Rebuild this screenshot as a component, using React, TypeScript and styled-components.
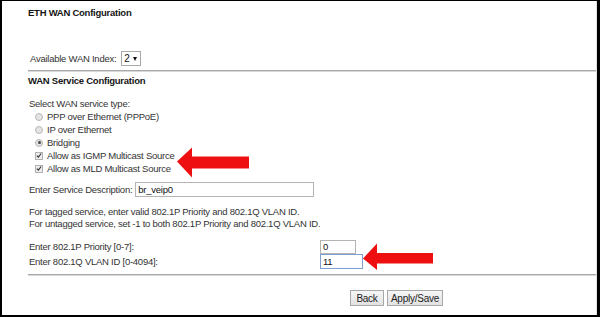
import React from "react";
import styled, { createGlobalStyle } from "styled-components";

const Global = createGlobalStyle`
  html, body { margin: 0; padding: 0; background: #fff; }
  body { font-family: "Liberation Sans", Arial, sans-serif; }
`;

const Page = styled.div`
  position: relative;
  width: 600px;
  height: 317px;
  overflow: hidden;
`;

const Frame = styled.div`
  box-sizing: border-box;
  width: 600px;
  height: 317px;
  border-style: solid;
  border-color: #000;
  border-width: 1px 3px 2px 2px;
  background: #fff;
`;

const Content = styled.div`
  box-sizing: border-box;
  height: 100%;
  padding: 6px 0 0 26px;
  border-right: 1px solid #e2e2e2;
  font-size: 9.5px;
  letter-spacing: -0.25px;
  color: #333;
  display: flex;
  flex-direction: column;
`;

const Title = styled.div<{ $mt?: number }>`
  margin-top: ${(p) => p.$mt ?? 0}px;
  font-weight: bold;
  color: #151515;
  line-height: 12px;
  height: 12px;
`;

const InlineRow = styled.div<{ $mt: number; $pl?: number; $gap?: number }>`
  margin-top: ${(p) => p.$mt}px;
  padding-left: ${(p) => p.$pl ?? 1}px;
  display: flex;
  align-items: center;
  height: 15px;
  gap: ${(p) => p.$gap ?? 3}px;
`;

const SelectBox = styled.div`
  box-sizing: border-box;
  width: 20px;
  height: 15px;
  border: 1px solid #a9a9a9;
  display: flex;
  align-items: center;
  justify-content: space-between;
  padding: 0 3px 0 2px;
  font-size: 10px;
  color: #111;
`;

const Caret = styled.span`
  width: 0;
  height: 0;
  border-left: 2.5px solid transparent;
  border-right: 2.5px solid transparent;
  border-top: 4px solid #111;
`;

const Rule = styled.div<{ $mt: number }>`
  margin-top: ${(p) => p.$mt}px;
  height: 0;
  border-top: 1px solid #a8a8a8;
  border-bottom: 1px solid #d8d8d8;
`;

const Line = styled.div<{ $mt?: number; $h?: number }>`
  margin-top: ${(p) => p.$mt ?? 0}px;
  padding-left: 1px;
  height: ${(p) => p.$h ?? 12}px;
  line-height: ${(p) => p.$h ?? 12}px;
  white-space: nowrap;
`;

const Options = styled.div`
  display: flex;
  flex-direction: column;
  padding-left: 7px;
`;

const OptionRow = styled.div`
  display: flex;
  align-items: center;
  gap: 4px;
  height: 13px;
  white-space: nowrap;
`;

const Radio = styled.span<{ $on?: boolean }>`
  box-sizing: border-box;
  width: 8px;
  height: 8px;
  border-radius: 50%;
  border: 1px solid #b8b8b8;
  background: #e4e4e4;
  display: flex;
  align-items: center;
  justify-content: center;
  &::after {
    content: "";
    display: ${(p) => (p.$on ? "block" : "none")};
    width: 3px;
    height: 3px;
    border-radius: 50%;
    background: #444;
  }
`;

const Check = styled.span`
  box-sizing: border-box;
  width: 8px;
  height: 8px;
  border: 1px solid #b0b0b0;
  background: #ececec;
  display: flex;
  align-items: center;
  justify-content: center;
`;

const TextInput = styled.div<{ $w: number; $focus?: boolean; $h?: number }>`
  box-sizing: border-box;
  width: ${(p) => p.$w}px;
  height: ${(p) => p.$h ?? 15}px;
  border: 1px solid ${(p) => (p.$focus ? "#7f9fd0" : "#b4b4b4")};
  padding-left: 2px;
  display: flex;
  align-items: center;
  color: #111;
  background: #fff;
`;

const FieldGrid = styled.div`
  margin-top: 9px;
  display: grid;
  grid-template-columns: 291px auto;
  grid-template-rows: 15px 15px;
  align-items: center;
  padding-left: 1px;
`;

const ButtonRow = styled.div`
  margin-top: 14px;
  padding-left: 322px;
  display: flex;
  gap: 3px;
`;

const Button = styled.div<{ $w: number }>`
  box-sizing: border-box;
  width: ${(p) => p.$w}px;
  height: 16px;
  border: 1px solid #a8a8a8;
  background: linear-gradient(#f6f6f6, #e2e2e2);
  display: flex;
  align-items: center;
  justify-content: center;
  font-size: 10px;
  color: #222;
`;

const Overlay = styled.svg`
  position: absolute;
  left: 0;
  top: 0;
  pointer-events: none;
`;

const Tick = () => (
  <svg width="7" height="7" viewBox="0 0 7 7">
    <path d="M1 3.6 L2.8 5.4 L6 1.2" stroke="#333" strokeWidth="1.3" fill="none" />
  </svg>
);

export default function App() {
  return (
    <Page>
      <Global />
      <Frame>
        <Content>
          <Title>ETH WAN Configuration</Title>
          <InlineRow $mt={32} $pl={2} $gap={5}>
            <span>Available WAN Index:</span>
            <SelectBox>
              <span>2</span>
              <Caret />
            </SelectBox>
          </InlineRow>
          <Rule $mt={4} />
          <Title $mt={3}>WAN Service Configuration</Title>
          <Line $mt={10} $h={13}>Select WAN service type:</Line>
          <Options>
            <OptionRow>
              <Radio />
              <span>PPP over Ethernet (PPPoE)</span>
            </OptionRow>
            <OptionRow>
              <Radio />
              <span>IP over Ethernet</span>
            </OptionRow>
            <OptionRow>
              <Radio $on />
              <span>Bridging</span>
            </OptionRow>
            <OptionRow>
              <Check>
                <Tick />
              </Check>
              <span>Allow as IGMP Multicast Source</span>
            </OptionRow>
            <OptionRow>
              <Check>
                <Tick />
              </Check>
              <span>Allow as MLD Multicast Source</span>
            </OptionRow>
          </Options>
          <InlineRow $mt={7}>
            <span>Enter Service Description:</span>
            <TextInput $w={179}>br_veip0</TextInput>
          </InlineRow>
          <Line $mt={9}>For tagged service, enter valid 802.1P Priority and 802.1Q VLAN ID.</Line>
          <Line>For untagged service, set -1 to both 802.1P Priority and 802.1Q VLAN ID.</Line>
          <FieldGrid>
            <span>Enter 802.1P Priority [0-7]:</span>
            <TextInput $w={36} $h={14}>0</TextInput>
            <span>Enter 802.1Q VLAN ID [0-4094]:</span>
            <TextInput $w={43} $focus>11</TextInput>
          </FieldGrid>
          <Rule $mt={5} />
          <ButtonRow>
            <Button $w={34}>Back</Button>
            <Button $w={56}>Apply/Save</Button>
          </ButtonRow>
        </Content>
      </Frame>
      <Overlay width="600" height="317" viewBox="0 0 600 317">
        <polygon
          points="177,161.5 192,147.5 192,156.5 249,156.5 249,168.5 192,168.5 192,177.5"
          fill="#ee1010"
        />
        <polygon
          points="363,258.5 377,243.5 377,253 433,253 433,263.5 377,263.5 377,270"
          fill="#ee1010"
        />
      </Overlay>
    </Page>
  );
}
